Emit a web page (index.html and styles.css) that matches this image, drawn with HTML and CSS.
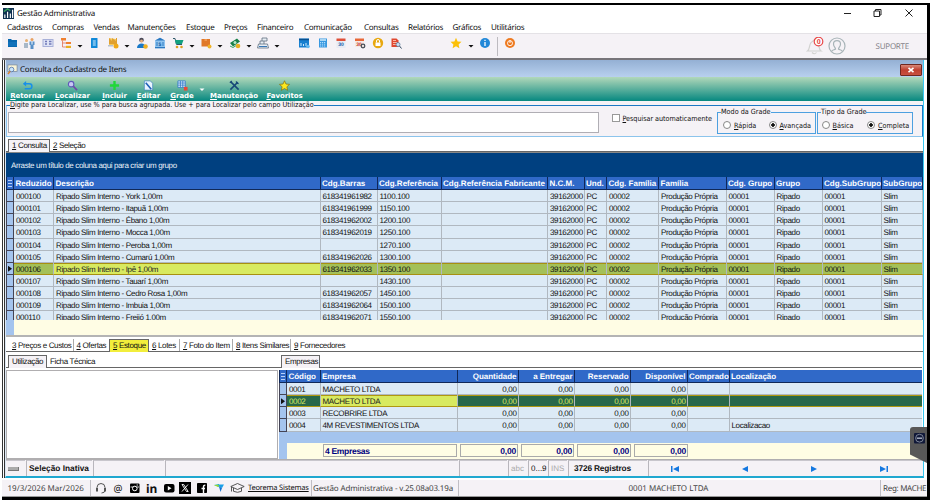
FILE: index.html
```html
<!DOCTYPE html>
<html lang="pt-BR">
<head>
  <meta charset="UTF-8" />
  <meta name="viewport" content="width=device-width, initial-scale=1.0" />
  <title>Gestão Administrativa</title>
  <link rel="stylesheet" href="styles.css">
</head>
<body>
  <div class="app">
    <div class="titlebar">
      <svg class="app-icon" viewBox="0 0 12 12"><rect width="12" height="12" fill="#0f3050"/><path d="M2 11V7M5 11V4M8 11V6M10.500 11V2" stroke="#fff" stroke-width="1.300"/><path d="M1 4l4-3 3 2" stroke="#38a060" stroke-width="1.500" fill="none"/></svg>
      <span class="app-title">Gestão Administrativa</span>
      <svg class="win-buttons" viewBox="0 0 72 10"><path d="M1 5.500h7M62.500 1.500l7 7M69.500 1.500l-7 7M31 3h5.500v5.500H31zM32.500 3V1.500H38V7h-1.500" fill="none" stroke="#222" stroke-width="1"/></svg>
    </div>

    <div class="menu">
      <span>Cadastros</span><span>Compras</span><span>Vendas</span><span>Manutenções</span><span>Estoque</span><span>Preços</span><span>Financeiro</span><span>Comunicação</span><span>Consultas</span><span>Relatórios</span><span>Gráficos</span><span>Utilitários</span>
    </div>

    <div class="toolbar">
      <div class="tools">
        <svg viewBox="0 0 12 12"><path d="M2 2h3l1 1h5v7H2z" fill="#0868b0"/><path d="M2 6h9M2 8h9" stroke="#2d8fd8" stroke-width=".5"/></svg>
        <svg viewBox="0 0 12 12"><circle cx="3.500" cy="3.500" r="1.500" fill="#e8b070"/><circle cx="9" cy="2.500" r="1.500" fill="#e8a060"/><path d="M1 6h4v5H1z" fill="#a8b8c8"/><path d="M6.500 4.500h5V8h-1v4h-3V8h-1z" fill="#5890c8"/><path d="M9 4.500v3" stroke="#fff"/></svg>
        <svg viewBox="0 0 12 12"><rect x="1" y="2.500" width="10" height="7" fill="#dfe3f5" stroke="#a8b0d8"/><path d="M3 4.500h2M3 7h2M7 4.500h2.500M7 7h2.500" stroke="#7078b8" stroke-width="1.300"/></svg>
        <svg viewBox="0 0 12 12"><path d="M1 1h5v2.500H1zM6 5h5v2H6z" fill="#f08030"/><path d="M6 8.800h5V11H6z" fill="#e8b020"/><path d="M2.500 3.500V10H6M2.500 6H6" fill="none" stroke="#e06040" stroke-width=".7"/></svg>
        <svg class="caret" viewBox="0 0 8 12"><path d="M1.500 8h5L4 10.500z"/></svg>
        <svg viewBox="0 0 12 12"><rect x="3" y="1" width="6.500" height="10" rx=".5" fill="#1088d8"/><path d="M4.800 4h3M4.800 6h3M4.800 8h3" stroke="#d8f0ff"/></svg>
        <svg viewBox="0 0 12 12"><path d="M2 1v7h7V2" fill="#f4c860"/><path d="M2 1l3 3V1l4 3V1h1v6H2z" fill="#e0a030"/><circle cx="9" cy="9" r="2.500" fill="#f0a818"/><path d="M1 8h5v1.500H1z" fill="#b8c0c8"/></svg>
        <svg class="caret" viewBox="0 0 8 12"><path d="M1.500 8h5L4 10.500z"/></svg>
        <svg viewBox="0 0 12 12"><circle cx="5.500" cy="3" r="2.300" fill="#484858"/><circle cx="5.500" cy="4" r="1.500" fill="#e8b080"/><path d="M1 11c0-6 9-6 9 0z" fill="#1878c8"/><circle cx="9.500" cy="9.500" r="2.300" fill="#f0b020"/></svg>
        <svg viewBox="0 0 12 12"><path d="M1 3.500L6 .8l5 2.700v7.700H1z" fill="#90c4f0"/><path d="M1 3.500L6 .8l5 2.700zM1 10h10v1.300H1z" fill="#2c78c0"/><path d="M3 5v4M9 5v4" stroke="#2c78c0"/><text x="4.500" y="9" class="glyph blue">$</text></svg>
        <svg viewBox="0 0 12 12"><path d="M1 1.500h2l1.500 6H10" fill="none" stroke="#305868"/><path d="M3 3h8.500l-1.500 4H4z" fill="#10a080"/><circle cx="5" cy="10" r="1.300" fill="#e0a020"/><circle cx="9.500" cy="10" r="1.300" fill="#e0a020"/></svg>
        <svg class="caret" viewBox="0 0 8 12"><path d="M1.500 8h5L4 10.500z"/></svg>
        <svg viewBox="0 0 12 12"><rect x="1.500" y="2" width="8.500" height="7.500" fill="#e07828"/><path d="M4.500 2h2.500v2H4.500z" fill="#f09850"/><circle cx="9.500" cy="9.500" r="2" fill="#f0b428"/></svg>
        <svg class="caret" viewBox="0 0 8 12"><path d="M1.500 8h5L4 10.500z"/></svg>
        <svg viewBox="0 0 12 12"><path d="M1 6l7-4.500 3 3L4 9.500z" fill="#188048"/><path d="M1 9l3 1.500L8 8" stroke="#38a868" fill="none"/><circle cx="6" cy="5.500" r="1.500" fill="#b8e8c8"/><circle cx="9" cy="9" r="2.300" fill="#e8b020"/></svg>
        <svg class="caret" viewBox="0 0 8 12"><path d="M1.500 8h5L4 10.500z"/></svg>
        <svg viewBox="0 0 12 12"><path d="M1.500 7h9l1 4H.5zM3 7V4h4v3M5 4V1h5v3H7" fill="#e8eef4" stroke="#607080" stroke-width=".8"/><path d="M2 9.500h8" stroke="#3878b8"/></svg>
        <svg class="caret" viewBox="0 0 8 12"><path d="M1.500 8h5L4 10.500z"/></svg>
        <svg viewBox="0 0 12 12"><rect x="1" y="1.500" width="10" height="9" fill="#1880d0"/><path d="M1 2.500h10" stroke="#085090" stroke-width="1.500"/><path d="M3 9V6M5.500 9V7M8 6v3" stroke="#d0ecff"/><circle cx="10" cy="9.500" r="1.800" fill="#60b8f0"/></svg>
        <svg viewBox="0 0 12 12"><rect x="2" y="1.500" width="8" height="9" fill="#3898e0"/><path d="M3 3h6" stroke="#e8f8ff" stroke-width="1.300"/><path d="M3 5.500h6M3 7.200h6M3 9h6" stroke="#c0e4ff" stroke-width=".9" stroke-dasharray="1.200 .8"/></svg>
        <svg viewBox="0 0 12 12"><rect x="1.500" y="2" width="9" height="9" fill="#e8ecf4"/><path d="M1.500 1.500h9V4h-9z" fill="#e05038"/><text x="3.200" y="9" class="glyph blue">30</text></svg>
        <svg viewBox="0 0 12 12"><rect x="1" y="2" width="9" height="8" fill="#f4e8e4"/><path d="M1 1.500h9V4H1z" fill="#e86838"/><text x="2.200" y="9" class="glyph red">30</text><circle cx="9" cy="9" r="1.800" fill="none" stroke="#485058" stroke-width="1.300"/></svg>
        <svg viewBox="0 0 12 12"><circle cx="6" cy="6" r="5.200" fill="#e8a810"/><path d="M4.500 5.500V4a1.500 1.500 0 0 1 3 0v1.500" fill="none" stroke="#fff"/><rect x="3.500" y="5.500" width="5" height="3.500" fill="#fff"/></svg>
        <svg viewBox="0 0 12 12"><path d="M1.500 1.500h5l2 2V10h-7z" fill="#e04830"/><path d="M3 3.500h3M3 5.500h4M3 7.500h3" stroke="#ffd0c0" stroke-width=".8"/><circle cx="8" cy="7.500" r="2" fill="#c8e0f4" stroke="#507090" stroke-width=".7"/><path d="M9.500 9l2 2.500" stroke="#304860"/></svg>
        <svg viewBox="0 0 12 12"><path d="M6 .8l1.600 3.600 3.900.4-2.900 2.600.8 3.900L6 9.300l-3.400 2 .8-3.900L.5 4.800l3.900-.4z" fill="#fcc008"/></svg>
        <svg class="caret" viewBox="0 0 8 12"><path d="M1.500 8h5L4 10.500z"/></svg>
        <svg viewBox="0 0 12 12"><circle cx="6" cy="6" r="5" fill="#2288d8"/><path d="M6 5v4M6 2.800v1.200" stroke="#fff" stroke-width="1.300"/></svg>
        <span class="tool-sep"></span>
        <svg viewBox="0 0 12 12"><circle cx="6" cy="6" r="5" fill="#ee7a20"/><circle cx="6" cy="6.200" r="2.500" fill="none" stroke="#fff" stroke-width=".9"/><path d="M6 3v3" stroke="#fff"/></svg>
      </div>
      <div class="support">
        <svg class="bell" viewBox="0 0 18 18"><path d="M1.500 14c3-2 1-8 5-9.500 1-2 3-2 3.500 0 4 1.500 2 7.500 5 9.500zM6 15.500q2.500 2.500 4.500 0" fill="none" stroke="#d2d2d0" stroke-width="1.200"/><circle cx="12.500" cy="4.500" r="4.300" fill="#fff" stroke="#e84848" stroke-width="1.200"/><text x="10.700" y="7" class="badge">0</text></svg>
        <svg class="avatar" viewBox="0 0 18 18"><circle cx="9" cy="9" r="8" fill="none" stroke="#a8b4b8" stroke-width="1.200"/><path d="M3.500 14.500c1-2 3-1.500 4-2.500 0-2-2-2-2-5 0-4.500 7-4.500 7 0 0 3-2 3-2 5 1 1 3 .5 4 2.500" fill="none" stroke="#a8b4b8" stroke-width="1.200"/></svg>
        <span>SUPORTE</span>
      </div>
    </div>

    <div class="workspace">
      <div class="window">
        <div class="window-title">
          <svg class="window-icon" viewBox="0 0 12 12"><rect x="1" y="1" width="10" height="7" fill="#f8f4d8" stroke="#788898" stroke-width=".8"/><circle cx="5" cy="6" r="2.500" fill="#c8e4fc" stroke="#4868a0" stroke-width=".8"/><path d="M3.500 8l-2.500 3" stroke="#e08030" stroke-width="1.600"/></svg>
          <span>Consulta do Cadastro de Itens</span>
          <div class="close"><svg viewBox="0 0 8 6"><path d="M1.500 .8l5 4.400M6.500 .8l-5 4.400" stroke="#fff" stroke-width="1.600"/></svg></div>
        </div>

        <div class="actions">
          <div class="action"><svg viewBox="0 0 12 12"><path d="M2 4h6a2.800 2.800 0 0 1 0 5.600H3" fill="none" stroke="#1890e8" stroke-width="1.600"/><path d="M4.500 1L1 4l3.500 3z" fill="#1890e8"/></svg><span><u>R</u>etornar</span></div>
          <div class="action"><svg viewBox="0 0 12 12"><circle cx="4.500" cy="4.500" r="3" fill="#c8c8f4" stroke="#6058b8" stroke-width="1.200"/><path d="M7 7l4 4" stroke="#7048a8" stroke-width="1.800"/></svg><span><u>L</u>ocalizar</span></div>
          <div class="action"><svg viewBox="0 0 12 12"><path d="M6 1v10M1 6h10" stroke="#20d838" stroke-width="2.600"/></svg><span><u>I</u>ncluir</span></div>
          <div class="action"><svg viewBox="0 0 12 12"><path d="M1.500 1h6.500l2.500 2.500V11h-9z" fill="#e8f4ff" stroke="#4080c0" stroke-width=".7"/><path d="M3 3l6 7" stroke="#2060b8" stroke-width="1.800"/></svg><span><u>E</u>ditar</span></div>
          <div class="action"><svg viewBox="0 0 12 12"><path d="M1 1h8v7H1z" fill="#e8f4ff"/><path d="M1 1h8v7H1zM1 3.300h8M1 5.600h8M3.700 1v7M6.300 1v7" fill="none" stroke="#3078c8" stroke-width=".9"/><rect x="7.500" y="7.500" width="4" height="4" fill="#e84838"/></svg><span><u>G</u>rade</span></div>
          <svg class="white-caret" viewBox="0 0 8 12"><path d="M1.500 4.500h5L4 7z"/></svg>
          <div class="action"><svg viewBox="0 0 12 12"><path d="M1.500 10.500l8-8M2 2l8.500 8.500" stroke="#184878" stroke-width="1.700"/><path d="M8 1.500l.5 2 2 .5M1 3l2-2" stroke="#184878" stroke-width="1.500" fill="none"/></svg><span><u>M</u>anutenção</span></div>
          <div class="action"><svg viewBox="0 0 12 12"><path d="M6 .8l1.600 3.600 3.900.4-2.900 2.600.8 3.900L6 9.300l-3.400 2 .8-3.900L.5 4.800l3.900-.4z" fill="#fce820" stroke="#806808" stroke-width=".7"/></svg><span><u>F</u>avoritos</span></div>
        </div>

        <div class="search-area">
          <fieldset class="search-panel">
            <legend><u>D</u>igite para Localizar, use % para busca agrupada. Use + para Localizar pelo campo Utilização</legend>
            <div class="search-row">
              <div class="search-input"></div>
              <div class="auto"><i class="checkbox"></i><span><u>P</u>esquisar automaticamente</span></div>
              <fieldset class="options mode">
                <legend>Modo da Grade</legend>
                <div class="radios"><i class="radio"></i><span><u>R</u>ápida</span><i class="radio checked"></i><span><u>A</u>vançada</span></div>
              </fieldset>
              <fieldset class="options kind">
                <legend>Tipo da Grade</legend>
                <div class="radios"><i class="radio"></i><span><u>B</u>ásica</span><i class="radio checked"></i><span><u>C</u>ompleta</span></div>
              </fieldset>
            </div>
          </fieldset>
        </div>

        <div class="tabs main-tabs">
          <span class="tab active"><u>1</u> Consulta</span><span class="tab"><u>2</u> Seleção</span>
        </div>

        <div class="group-bar">Arraste um título de coluna aqui para criar um grupo</div>
        <div class="grid items" id="items"></div>
        <div class="grid-footer"></div>

        <div class="tabs detail-tabs">
          <span class="tab"><u>3</u> Preços e Custos</span><span class="tab"><u>4</u> Ofertas</span><span class="tab active yellow"><u>5</u> Estoque</span><span class="tab"><u>6</u> Lotes</span><span class="tab"><u>7</u> Foto do Item</span><span class="tab"><u>8</u> Itens Similares</span><span class="tab"><u>9</u> Fornecedores</span>
        </div>

        <div class="detail">
          <div class="usage">
            <div class="tabs usage-tabs"><span class="tab active">Utilização</span><span class="tab">Ficha Técnica</span></div>
            <div class="memo"></div>
          </div>
          <div class="stock">
            <div class="tabs stock-tabs"><span class="tab active">Empresas</span></div>
            <div class="grid companies" id="companies"></div>
            <div class="blank-row"></div>
            <div class="totals">
              <i></i><span></span><b class="left">4 Empresas</b><b>0,00</b><b>0,00</b><b>0,00</b><b>0,00</b>
            </div>
          </div>
        </div>

        <div class="window-status">
          <div class="cell handle"><i></i></div>
          <div class="cell strong">Seleção Inativa</div>
          <div class="cell"></div>
          <div class="cell"></div>
          <div class="cell"></div>
          <div class="cell off">abc</div>
          <div class="cell">0...9</div>
          <div class="cell off">INS</div>
          <div class="cell strong count">3726 Registros</div>
          <div class="cell nav">
            <svg viewBox="0 0 10 8"><path d="M1 1h1.500v6H1zM9 1v6L3 4z"/></svg>
            <svg viewBox="0 0 10 8"><path d="M8 1v6L2 4z"/></svg>
            <svg viewBox="0 0 10 8"><path d="M2 1v6l6-3z"/></svg>
            <svg viewBox="0 0 10 8"><path d="M1 1v6l6-3zM7.500 1H9v6H7.500z"/></svg>
          </div>
        </div>
      </div>
    </div>

    <div class="app-status">
      <div class="date">19/3/2026 Mar/2026</div>
      <div class="links">
        <svg viewBox="0 0 12 12"><path d="M2 8V5.500a4 4 0 0 1 8 0V8q0 3-3.500 3" fill="none" stroke="#444" stroke-width=".9"/><path d="M1 6h2v3.500H1zM9 6h2v3.500H9z" fill="#555"/></svg>
        <span class="at">@</span>
        <svg viewBox="0 0 12 12"><rect x="1" y="1.500" width="9.500" height="9.500" rx="1"/><circle cx="5.800" cy="6.500" r="2.300" fill="none" stroke="#fff"/><path d="M7.500 3h1.500M1.500 5h2.500M7.500 5H10" stroke="#fff" stroke-width=".8"/></svg>
        <span class="in">in</span>
        <svg viewBox="0 0 12 12"><rect x="1" y="2" width="10.500" height="8.500" rx="2"/><path d="M4.800 4v4.500L8.500 6.200z" fill="#fff"/></svg>
        <svg viewBox="0 0 12 12"><rect width="12" height="12"/><path d="M3 2.500h1.700l4.500 7H7.500zM9 2.500l-6 7" fill="none" stroke="#fff" stroke-width=".9"/></svg>
        <svg viewBox="0 0 12 12"><rect x="1" y="1" width="10" height="10" rx=".8"/><path d="M7.500 11V4.500q0-1.300 1.800-1.200M5.500 6.500H9" fill="none" stroke="#fff" stroke-width="1.400"/></svg>
        <svg viewBox="0 0 12 12"><path d="M1 3l5-1v3z" fill="#28b8a0"/><path d="M5 2.500h6L9 6 6.500 5z" fill="#18a0e8"/><path d="M6 4.500L9 6 7.500 10z" fill="#1070d0"/><path d="M1 3l4 2 1-2z" fill="#98d830"/></svg>
        <svg class="cap" viewBox="0 0 15 12"><path d="M.8 4.500L7.500 1.500l6.700 3L7.500 7.500zM3.500 6v3.300q4 2 8 0V6M1.500 5v4.500" fill="none" stroke="#444" stroke-width=".9"/></svg>
        <u>Teorema Sistemas</u>
      </div>
      <div class="version">Gestão Administrativa - v.25.08a03.19a</div>
      <div class="company">0001 MACHETO LTDA</div>
      <div class="reg">Reg: MACHE</div>
    </div>

    <svg class="remote-tab" viewBox="0 0 17 37"><path d="M17 0H3Q0 0 0 3v24.500L17 36z" fill="#585858"/><rect x="4" y="6" width="11" height="10.500" rx="1" fill="#101838"/><circle cx="9.500" cy="11.200" r="3.900" fill="none" stroke="#8890a0" stroke-width=".9"/><path d="M6.800 11.200h5.400" stroke="#a8b0c0" stroke-width="1.500"/></svg>
  </div>

  <script>
    const items = [
      ["000100", "York", "618341961982", "1100.100"],
      ["000101", "Itapuã", "618341961999", "1150.100"],
      ["000102", "Ébano", "618341962002", "1200.100"],
      ["000103", "Mocca", "618341962019", "1250.100"],
      ["000104", "Peroba", "", "1270.100"],
      ["000105", "Cumarú", "618341962026", "1300.100"],
      ["000106", "Ipê", "618341962033", "1350.100"],
      ["000107", "Tauarí", "", "1430.100"],
      ["000108", "Cedro Rosa", "618341962057", "1450.100"],
      ["000109", "Imbuia", "618341962064", "1500.100"],
      ["000110", "Freijó", "618341962071", "1550.100"]
    ];
    const companies = [
      ["0001", "MACHETO LTDA", ""],
      ["0002", "MACHETO LTDA", ""],
      ["0003", "RECOBRIRE LTDA", ""],
      ["0004", "4M REVESTIMENTOS LTDA", "Localizacao"]
    ];

    function row(cells, cls) {
      return `<div class="row ${cls}"><i></i>${cells.map(c => `<span>${c}</span>`).join('')}</div>`;
    }

    document.getElementById("items").innerHTML =
      row(["Reduzido", "Descrição", "Cdg.Barras", "Cdg.Referência", "Cdg.Referência Fabricante", "N.C.M.", "Und.",
        "Cdg. Família", "Família", "Cdg. Grupo", "Grupo", "Cdg.SubGrupo", "SubGrupo"], "head") +
      items.map(r => row([r[0], `Ripado Slim Interno - ${r[1]} 1,00m`, r[2], r[3], "", "39162000", "PC", "00002",
        "Produção Própria", "00001", "Ripado", "00001", "Slim"], r[0] === "000106" ? "selected" : "")).join('');

    document.getElementById("companies").innerHTML =
      row(["Código", "Empresa", "Quantidade", "a Entregar", "Reservado", "Disponível", "Comprado", "Localização"], "head") +
      companies.map(r => row([r[0], r[1], "0,00", "0,00", "0,00", "0,00", "", r[2]],
        r[0] === "0002" ? "selected" : "")).join('');
  </script>
</body>
</html>
```

FILE: styles.css
```css
* {
  box-sizing: border-box;
}
body {
  margin: 0;
  background: #fff;
  width: 930px;
  height: 501px;
  overflow: hidden;
  font-family: "Noto Sans", sans-serif;
  font-size: 8px;
  color: #111;
  text-rendering: geometricPrecision;
  white-space: nowrap;
}
svg {
  display: block;
  flex: none;
}
i {
  font-style: normal;
}
u {
  text-underline-offset: 1px;
  text-decoration-thickness: 1px;
}
.app {
  position: relative;
  display: flex;
  flex-direction: column;
  width: 928px;
  height: 497px;
  margin: 3px 0 0 2px;
  border-top: 2px solid #000;
  border-right: 3px solid #000;
  border-bottom: 3px solid #000;
  overflow: hidden;
}

/* title and menu */
.titlebar {
  display: flex;
  align-items: center;
  flex: none;
  height: 17px;
  padding: 0 12px 0 1px;
}
.app-icon {
  width: 11px;
  height: 11px;
  margin-right: 3px;
}
.app-title {
  flex: 1;
  letter-spacing: -0.23px;
}
.win-buttons {
  width: 72px;
  height: 10px;
  margin-bottom: 2px;
}
.menu {
  display: grid;
  flex: none;
  grid-template-columns: 45px 41.500px 34px 58.500px 38px 33px 47px 60px 44px 44.500px 38.500px 40px;
  height: 11px;
  line-height: 11px;
  padding-left: 5px;
  letter-spacing: -0.27px;
}

/* toolbar */
.toolbar {
  display: flex;
  justify-content: space-between;
  flex: none;
  height: 27px;
  background: #f5f2f6;
  border-top: 1px solid #e4e2e6;
  border-bottom: 2px solid #77757a;
}
.tools {
  display: grid;
  grid-template-columns: 17.500px 19px 18px 16px 12px 19px 16px 13px 18px 17.500px 16.500px 12px 16px 13px 16px 12px 16px 25px 19px 18px 19px 18px 18px 60px 17px 12px 18px 7px 12px;
  padding: 3px 0 0 3.500px;
}
.tools svg {
  width: 12px;
  height: 12px;
}
.tools .caret {
  width: 8px;
  fill: #111;
}
.tool-sep {
  width: 1px;
  height: 19px;
  background: #bdbbc0;
}
.glyph {
  font: bold 5px "Liberation Sans", sans-serif;
}
.glyph.blue {
  fill: #1860a8;
}
.glyph.red {
  fill: #c83828;
}
.support {
  display: flex;
  align-items: center;
  padding-right: 18px;
  color: #85838a;
  letter-spacing: -0.25px;
}
.bell, .avatar {
  width: 18px;
  height: 18px;
}
.avatar {
  margin: 0 30px 0 4px;
}
.badge {
  font: bold 7px "Liberation Sans", sans-serif;
  fill: #e03838;
}

/* child window */
.workspace {
  flex: none;
  height: 418px;
  padding-right: 3px;
  border-left: 3px double #333;
}
.window {
  display: flex;
  flex-direction: column;
  height: 418px;
  border: solid #38c8f0;
  border-width: 0 1px 2px 1px;
  border-left-color: #dce8f4;
  border-bottom-color: #20a8d0;
}
.window-title {
  display: flex;
  align-items: center;
  flex: none;
  height: 17px;
  padding: 2px 1px 0;
  background: linear-gradient(#94b0d4, #b8d0ee);
  letter-spacing: -0.23px;
}
.window-icon {
  width: 11px;
  height: 11px;
  margin-right: 2px;
}
.close {
  display: flex;
  align-items: center;
  justify-content: center;
  width: 22px;
  height: 12px;
  margin-left: auto;
  background: linear-gradient(#d88878, #c04030 50%, #c85040);
  border: 1px solid #702820;
  border-radius: 1px;
}
.close svg {
  width: 8px;
  height: 6px;
}
.actions {
  display: grid;
  flex: none;
  grid-template-columns: 43px 47px 37px 31px 36px 9px 50px 51px;
  height: 24px;
  background: linear-gradient(#b2d8ba, #068880);
}
.action {
  display: flex;
  flex-direction: column;
  align-items: center;
  padding-top: 3px;
  color: #fff;
  font: bold 7px/10px "DejaVu Sans", sans-serif;
  letter-spacing: -0.05px;
}
.action svg {
  width: 11px;
  height: 11px;
}
.white-caret {
  width: 8px;
  height: 12px;
  margin: 7px 0 0 -2px;
  fill: #fff;
}

/* search */
.search-area {
  flex: none;
  height: 36px;
  background: #f5f2f6;
  font: 7.200px "DejaVu Sans Condensed", "DejaVu Sans", sans-serif;
}
fieldset {
  min-width: 0;
  margin: 0;
  padding: 0;
}
legend {
  line-height: 8px;
  padding: 0;
}
.search-panel {
  height: 36px;
  border: 1px solid #1c78c4;
  border-left-color: #8cc4ec;
  border-bottom-color: #8cc4ec;
}
.search-panel > legend {
  margin-left: 3px;
  letter-spacing: -0.02px;
}
.search-row {
  display: flex;
}
.search-row > * {
  flex: none;
}
.search-input {
  width: 591px;
  height: 21px;
  margin: 3px 0 0 1px;
  background: #fff;
  border: 1px solid #b0aeb4;
}
.auto {
  display: flex;
  gap: 2.500px;
  width: 118px;
  padding: 5px 0 0 13px;
  letter-spacing: -0.05px;
}
.checkbox {
  flex: none;
  width: 8px;
  height: 8px;
  background: #fff;
  border: 1px solid #999;
}
.options {
  height: 26px;
  margin-top: -1px;
  border: 1px solid #4ca0e0;
}
.options legend {
  margin-left: 3px;
}
.mode {
  width: 99px;
  margin-right: 1px;
}
.kind {
  width: 96px;
}
.radios {
  display: grid;
  grid-template-columns: 11px 34.500px 11px 36px;
  padding: 4.500px 0 0 5px;
  line-height: 9px;
}
.kind .radios {
  padding-left: 3.500px;
}
.radio {
  width: 8px;
  height: 8px;
  background: #fff;
  border: 1px solid #888;
  border-radius: 50%;
}
.radio.checked {
  background: radial-gradient(circle, #111 1.500px, #fff 2px);
}

/* tabs */
.tabs {
  display: flex;
  align-items: flex-end;
  flex: none;
  background: #fff;
  border-bottom: 1px solid #666;
  font: 8px/11px "Liberation Sans", sans-serif;
  letter-spacing: -0.35px;
}
.tab {
  height: 12px;
  padding: 1px 3px 0;
  border-right: 0 solid #aaa;
}
.tab.active {
  height: 13px;
  margin-bottom: -1px;
  padding-top: 0;
  background: #f5f2f6;
  border: 1px solid #666;
  border-bottom: 0;
}
.main-tabs {
  height: 15px;
  padding-left: 2px;
}
.main-tabs .active {
  width: 42px;
}
.detail-tabs {
  height: 15px;
  padding-left: 3px;
}
.detail-tabs .tab {
  border-right-width: 1px;
}
.detail-tabs .tab:nth-child(2), .detail-tabs .tab:last-child {
  border-right: 0;
}
.detail-tabs .tab:nth-child(1) { width: 64.500px; }
.detail-tabs .tab:nth-child(2) { width: 35.500px; }
.detail-tabs .tab:nth-child(3) { width: 40px; }
.detail-tabs .tab:nth-child(4) { width: 31px; }
.detail-tabs .tab:nth-child(5) { width: 53px; }
.detail-tabs .tab:nth-child(6) { width: 58px; }
.tab.yellow {
  background: #f2ee3c;
}

/* grids */
.group-bar {
  flex: none;
  height: 25px;
  padding-left: 5px;
  background: #004080;
  border-top: 1px solid #888;
  color: #e8f0f8;
  font: 8px/26px "Liberation Sans", sans-serif;
  letter-spacing: -0.37px;
}
.grid {
  flex: none;
  overflow: hidden;
  font: 8px/13px "Liberation Sans", sans-serif;
  letter-spacing: -0.35px;
}
.row {
  display: grid;
  height: 12.150px;
}
.items {
  height: 143px;
}
.items .row {
  grid-template-columns: 8px 40px 266.500px 57px 64px 106.500px 36.500px 22.500px 52px 67.500px 48px 48px 59px 41px;
}
.companies .row {
  grid-template-columns: 8px 33.500px 137px 61px 56px 56px 57px 42px 193px;
}
.row > span {
  padding-left: 2px;
  background: #dceaf6;
  border: solid #b0b8c0;
  border-width: 0 1px 1px 0;
  overflow: hidden;
}
.row > i {
  background: #a4c4ee;
  border: solid #445;
  border-width: 0 1px 1px 1px;
}
.row.head {
  height: 13px;
  line-height: 14px;
  color: #fff;
  font-weight: bold;
  letter-spacing: 0.02px;
}
.companies .row.head {
  letter-spacing: -0.02px;
}
.row.head > span {
  padding-left: 1.500px;
  background: #3069c8;
  border-color: #102858;
}
.row.head > i {
  background: #3069c8;
  border-color: #102858;
}
.row.head > i::before {
  content: "";
  display: block;
  width: 4px;
  height: 7px;
  margin: 3px 0 0 1px;
  background: repeating-linear-gradient(#b8d0f8 0 1px, #3069c8 1px 3px);
}
.items .selected > span {
  background: #a4c058;
  border-bottom-color: #a89010;
  box-shadow: inset 0 1px #a89010;
}
.items .selected > span:nth-child(3), .companies .selected > span:nth-child(3) {
  background: #d8ea60;
  color: #222;
}
.selected > i::before {
  content: "";
  display: block;
  width: 4px;
  height: 6px;
  margin: 3px 0 0 1px;
  background: #111;
  clip-path: polygon(0 0, 100% 50%, 0 100%);
}
.companies .selected > span {
  background: #28684a;
  color: #d8ea60;
  border-bottom-color: #b09810;
  box-shadow: inset 0 1px #b09810;
}
.companies .row > span:nth-child(n+4):nth-child(-n+7) {
  text-align: right;
  padding-right: 1px;
}
.grid-footer {
  flex: none;
  height: 17px;
  background: linear-gradient(90deg, #a4c4ee 8px, #fffde4 8px);
  border-bottom: 2px solid #b4b4b4;
}

/* details */
.detail {
  display: flex;
  flex: none;
  height: 108px;
  border-bottom: 1px solid #b0aeb0;
  background: #fff;
}
.usage {
  width: 273px;
}
.stock {
  width: 643px;
}
.usage-tabs, .stock-tabs {
  height: 16px;
  padding-left: 2px;
  margin-bottom: 2px;
}
.usage-tabs .active {
  width: 39px;
}
.stock-tabs .active {
  width: 39px;
}
.memo {
  width: 272px;
  height: 89px;
  border: 1px solid #b0aeb0;
}
.companies {
  height: 61.500px;
}
.blank-row {
  height: 11.500px;
  background: #a4c4ee;
}
.totals {
  display: grid;
  grid-template-columns: 8px 30px 134px 58px 53px 54px 54px;
  column-gap: 3px;
  height: 16px;
  background: #fffde4;
}
.totals i {
  background: #a4c4ee;
}
.totals b {
  height: 13px;
  margin-top: 1px;
  padding: 0 1px;
  border: 1px solid #aaa;
  color: #000080;
  font: bold 8.500px/12px "Liberation Sans", sans-serif;
  letter-spacing: -0.2px;
  text-align: right;
}
.totals .left {
  text-align: left;
  letter-spacing: -0.3px;
}

/* status bars */
.window-status {
  display: grid;
  flex: none;
  grid-template-columns: 19px 66px 71px 293px 48px 19px 19px 19px 79px 1fr;
  column-gap: 1px;
  height: 16px;
  background: #f5f2f6;
  font: 8px/15px "Liberation Sans", sans-serif;
}
.cell {
  padding-left: 2px;
  border-left: 1px solid #b8b6bc;
  border-top: 1px solid #c8c6cc;
}
.handle {
  border-left: 0;
  padding: 6px 0 0 2px;
}
.handle i {
  display: block;
  width: 11px;
  height: 4px;
  background: #aaa;
  border: solid #777;
  border-width: 0 1px 1px 0;
}
.strong {
  font-weight: bold;
  font-size: 8.300px;
}
.off {
  color: #aaa;
}
.count {
  padding-left: 5px;
  letter-spacing: -0.15px;
}
.nav {
  display: flex;
  align-items: center;
  gap: 59.600px;
  padding-left: 21px;
}
.nav svg {
  width: 10px;
  height: 8px;
  fill: #1478e0;
}
.app-status {
  display: grid;
  flex: none;
  grid-template-columns: 89px 221px 147px 422px 46px;
  height: 19px;
  background: #f5f2f6;
  border-top: 2px solid #fff;
  border-bottom: 1px solid #999;
  color: #444;
  line-height: 17px;
}
.app-status > div {
  border-right: 1px solid #c0bec4;
  overflow: hidden;
}
.date {
  padding-left: 5.500px;
}
.links {
  display: flex;
  align-items: center;
  gap: 4.900px;
  padding-left: 4px;
  color: #111;
}
.links svg {
  width: 12px;
  height: 12px;
}
.links .cap {
  width: 15px;
}
.links u {
  font-size: 7.500px;
  letter-spacing: -0.22px;
  margin-left: -2px;
}
.at, .in {
  width: 12px;
  text-align: center;
  font-size: 10px;
}
.in {
  font-weight: bold;
  font-size: 12px;
}
.version {
  padding-left: 1px;
  letter-spacing: -0.14px;
}
.company {
  text-align: center;
  padding-right: 2px;
}
.app-status .reg {
  padding-left: 2px;
  border-right: 0;
  letter-spacing: -0.3px;
}

/* floating over the window's right edge */
.remote-tab {
  position: absolute;
  right: 0;
  top: 422px;
  width: 17px;
  height: 37px;
}
```
